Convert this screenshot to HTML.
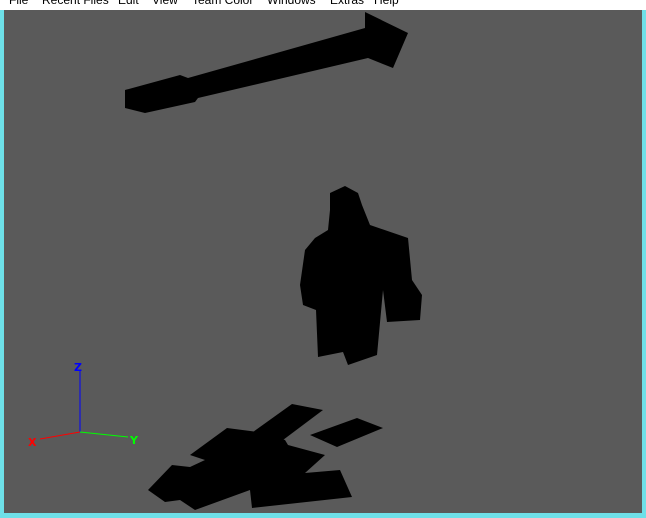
<!DOCTYPE html>
<html><head><meta charset="utf-8"><style>
html,body{margin:0;padding:0;width:646px;height:518px;overflow:hidden;background:#6ee0e8}
.menu{position:absolute;left:0;top:0;width:646px;height:10px;background:#fff;overflow:hidden}
.menu span{position:absolute;top:-7px;font:12px "Liberation Sans",sans-serif;color:#000}
svg{position:absolute;left:0;top:0}
</style></head><body>
<div class="menu">
<span style="left:9px">File</span><span style="left:42px">Recent Files</span><span style="left:118px">Edit</span><span style="left:152px">View</span><span style="left:192px">Team Color</span><span style="left:267px">Windows</span><span style="left:330px">Extras</span><span style="left:374px">Help</span>
</div>
<svg width="646" height="518">
<rect x="4" y="10" width="638" height="503" fill="#5a5a5a"/>
<polygon fill="#000" points="125,90 180,75 188,78 365,28 365,12 408,33 393,68 368,58 198,98 195,102 145,113 125,108"/>
<polygon fill="#000" points="330,193 345,186 358,193 362,205 370,225 408,238 412,280 422,295 420,320 387,322 383,290 377,355 348,365 343,352 318,357 316,310 303,305 300,285 305,250 315,238 328,230 330,210"/>
<polygon fill="#000" points="292,404 323,410 283,440 253,432"/>
<polygon fill="#000" points="357,418 383,428 337,447 310,435"/>
<polygon fill="#000" points="190,455 227,428 258,432 285,440 288,445 325,455 305,473 340,470 352,497 252,508 250,490 195,510 180,500 165,502 148,490 172,465 190,467 205,460"/>
<line x1="80" y1="432" x2="80" y2="370" stroke="#0000ff" stroke-width="1"/>
<line x1="80" y1="432" x2="40" y2="439" stroke="#ff0000" stroke-width="1"/>
<line x1="80" y1="432" x2="128" y2="437" stroke="#00ff00" stroke-width="1"/>
<text x="74" y="371" font-family="DejaVu Sans,sans-serif" font-weight="bold" font-size="11" fill="#0000ff">Z</text>
<text x="28" y="446" font-family="DejaVu Sans,sans-serif" font-weight="bold" font-size="11" fill="#ff0000">X</text>
<text x="130" y="444" font-family="DejaVu Sans,sans-serif" font-weight="bold" font-size="11" fill="#00ff00">Y</text>
</svg>
</body></html>
